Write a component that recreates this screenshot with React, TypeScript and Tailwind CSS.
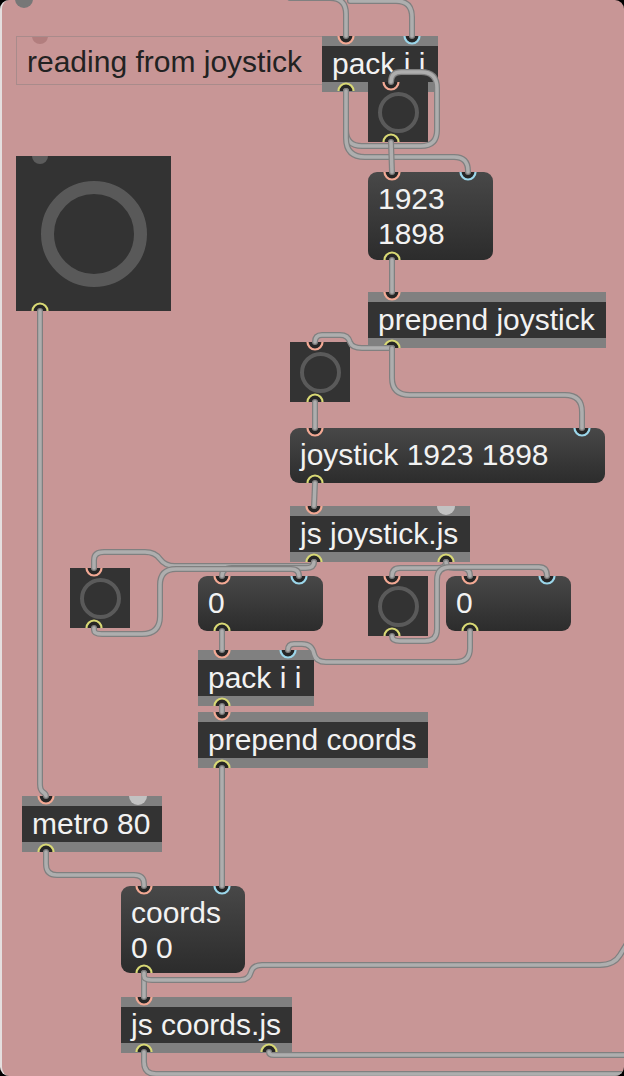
import React from 'react';

type Port = { x: number; y: number; c: 'hot' | 'cold' | 'out' };

const portColor = { hot: '#f3a994', cold: '#9bd6ea', out: '#d9d975' };

// inlets sit on the top edge, outlets on the bottom edge
const ports: Port[] = [
  // pack i i (top)
  { x: 346, y: 36, c: 'hot' }, { x: 412, y: 36, c: 'cold' }, { x: 346, y: 91, c: 'out' },
  // button 1
  { x: 391, y: 82, c: 'hot' }, { x: 391, y: 142, c: 'out' },
  // big square
  { x: 40, y: 311, c: 'out' },
  // 1923 1898
  { x: 392, y: 172, c: 'hot' }, { x: 468, y: 172, c: 'cold' }, { x: 392, y: 260, c: 'out' },
  // prepend joystick
  { x: 392, y: 292, c: 'hot' }, { x: 392, y: 348, c: 'out' },
  // button 2
  { x: 315, y: 342, c: 'hot' }, { x: 315, y: 402, c: 'out' },
  // joystick 1923 1898
  { x: 315, y: 428, c: 'hot' }, { x: 582, y: 428, c: 'cold' }, { x: 315, y: 483, c: 'out' },
  // js joystick.js
  { x: 314, y: 506, c: 'hot' }, { x: 314, y: 562, c: 'out' }, { x: 446, y: 562, c: 'out' },
  // button 3 / 0
  { x: 94, y: 568, c: 'hot' }, { x: 94, y: 628, c: 'out' },
  { x: 222, y: 576, c: 'hot' }, { x: 299, y: 576, c: 'cold' }, { x: 222, y: 631, c: 'out' },
  // button 4 / 0
  { x: 392, y: 576, c: 'hot' }, { x: 392, y: 636, c: 'out' },
  { x: 470, y: 576, c: 'hot' }, { x: 547, y: 576, c: 'cold' }, { x: 470, y: 631, c: 'out' },
  // pack i i (bottom)
  { x: 222, y: 650, c: 'hot' }, { x: 288, y: 650, c: 'cold' }, { x: 222, y: 706, c: 'out' },
  // prepend coords
  { x: 222, y: 712, c: 'hot' }, { x: 222, y: 768, c: 'out' },
  // metro 80
  { x: 46, y: 796, c: 'hot' }, { x: 46, y: 852, c: 'out' },
  // coords 0 0
  { x: 144, y: 886, c: 'hot' }, { x: 222, y: 886, c: 'cold' }, { x: 144, y: 973, c: 'out' },
  // js coords.js
  { x: 144, y: 997, c: 'hot' }, { x: 144, y: 1052, c: 'out' }, { x: 269, y: 1052, c: 'out' },
];

const cords: string[] = [
  'M 290 -2 L 330 -2 Q 346 -2 346 14 L 346 36',
  'M 350 1 L 396 1 Q 412 1 412 17 L 412 36',
  'M 346 91 L 346 130 Q 346 146 362 146 L 421 146 Q 437 146 437 130 L 437 88 Q 437 72 421 72 L 401 72 Q 391 72 391 82',
  'M 346 91 L 346 138 Q 346 157 365 157 L 454 157 Q 468 157 468 171 L 468 172',
  'M 391 142 L 392 172',
  'M 392 260 L 392 292',
  'M 392 348 L 362 348 Q 352 348 350 342 Q 348 335 340 335 L 322 335 Q 315 335 315 342',
  'M 392 348 L 392 378 Q 392 395 410 395 L 565 395 Q 582 395 582 412 L 582 428',
  'M 315 402 L 315 428',
  'M 315 483 L 314 506',
  'M 314 562 Q 314 566 306 566 L 175 566 Q 165 566 160 559 Q 155 552 145 552 L 104 552 Q 94 552 94 560 L 94 568',
  'M 314 562 Q 314 568 306 568 L 232 568 Q 222 568 222 576',
  'M 94 628 L 94 630 Q 94 634 102 634 L 142 634 Q 160 634 160 616 L 160 585 Q 160 569 176 569 L 291 569 Q 299 569 299 576',
  'M 446 562 Q 446 568 438 568 L 400 568 Q 392 568 392 576',
  'M 446 562 Q 446 568 454 568 L 462 568 Q 470 568 470 576',
  'M 392 636 Q 392 641 400 641 L 425 641 Q 437 641 437 629 L 437 580 Q 437 567 450 567 L 539 567 Q 547 567 547 576',
  'M 222 631 L 222 650',
  'M 470 631 L 470 648 Q 470 662 456 662 L 326 662 Q 316 662 314 654 Q 312 644 302 644 L 294 644 Q 288 644 288 650',
  'M 222 706 L 222 712',
  'M 222 768 L 222 886',
  'M 40 311 L 40 784 Q 40 790 43 792 Q 46 794 46 796',
  'M 46 852 L 46 864 Q 46 875 57 875 L 134 875 Q 144 875 144 884 L 144 886',
  'M 144 973 L 144 997',
  'M 144 973 L 144 976 Q 144 980 152 980 L 240 980 Q 249 980 251 972 Q 253 965 262 965 L 600 965 Q 614 965 620 955 L 628 942',
  'M 144 1052 L 144 1062 Q 144 1074 156 1074 L 630 1074',
  'M 269 1052 Q 269 1055 274 1055 L 630 1055',
];

function ObjBox({ pos, text, dot }: { pos: string; text: string; dot?: string }) {
  return (
    <div className={`absolute flex h-[56px] flex-col overflow-hidden ${pos}`}>
      <div className="h-[10px] bg-[#808080]" />
      <div className="h-[36px] whitespace-nowrap bg-[#333333] pl-[10px] text-[30px] leading-[35px] text-[#f2f2f2]">
        {text}
      </div>
      <div className="h-[10px] bg-[#808080]" />
      {dot && <div className={`absolute top-[-9px] h-[18px] w-[18px] rounded-full bg-[#c2c2c2] ${dot}`} />}
    </div>
  );
}

function MsgBox({ pos, lines }: { pos: string; lines: string[] }) {
  return (
    <div
      className={`absolute whitespace-nowrap rounded-[9px] bg-linear-to-b from-[#484848] to-[#2c2c2c] pl-[10px] pt-[9px] text-[30px] leading-[35px] text-[#f2f2f2] ${pos}`}
    >
      {lines.map((l) => (
        <div key={l}>{l}</div>
      ))}
    </div>
  );
}

function Btn({ pos }: { pos: string }) {
  return (
    <div className={`absolute flex h-[60px] w-[60px] items-center justify-center bg-[#333333] ${pos}`}>
      <div className="h-[41px] w-[41px] rounded-full border-4 border-[#5a5a5a]" />
    </div>
  );
}

export default function App() {
  return (
    <div className="h-[1076px] w-[624px] bg-black font-['Liberation_Sans',Arial,sans-serif]">
      <div className="relative h-full w-full overflow-hidden rounded-[9px] border-l-2 border-[#e4dfdf] bg-[#c89696]">
        <div className="absolute left-[13px] top-[-10px] h-[18px] w-[18px] rounded-full bg-[#777777]" />

        <div className="absolute left-[14px] top-[36px] h-[49px] w-[324px] overflow-hidden border border-[#a98b8b] pl-[10px] pt-[7px] text-[30px] leading-[35px] text-[#222222]">
          <div className="absolute left-[15px] top-[-9px] h-[16px] w-[16px] rounded-full bg-[#b27e7e]" />
          reading from joystick
        </div>

        <div className="absolute left-[14px] top-[156px] flex h-[155px] w-[155px] items-center justify-center overflow-hidden bg-[#333333]">
          <div className="absolute left-[16px] top-[-8px] h-[16px] w-[16px] rounded-full bg-[#5c5c5c]" />
          <div className="h-[106px] w-[106px] rounded-full border-[13px] border-[#595959]" />
        </div>

        <ObjBox pos="left-[320px] top-[36px] w-[116px]" text="pack i i" />
        <MsgBox pos="left-[366px] top-[172px] h-[88px] w-[125px] pt-[8px]" lines={['1923', '1898']} />
        <ObjBox pos="left-[366px] top-[292px] w-[238px]" text="prepend joystick" />
        <MsgBox pos="left-[288px] top-[428px] h-[55px] w-[315px]" lines={['joystick 1923 1898']} />
        <ObjBox pos="left-[288px] top-[506px] w-[180px]" text="js joystick.js" dot="left-[147px]" />
        <MsgBox pos="left-[196px] top-[576px] h-[55px] w-[125px]" lines={['0']} />
        <MsgBox pos="left-[444px] top-[576px] h-[55px] w-[125px]" lines={['0']} />
        <ObjBox pos="left-[196px] top-[650px] w-[116px]" text="pack i i" />
        <ObjBox pos="left-[196px] top-[712px] w-[230px]" text="prepend coords" />
        <ObjBox pos="left-[20px] top-[796px] w-[140px]" text="metro 80" dot="left-[107px]" />
        <MsgBox pos="left-[119px] top-[886px] h-[87px] w-[124px]" lines={['coords', '0 0']} />
        <ObjBox pos="left-[119px] top-[997px] w-[171px]" text="js coords.js" />

        <Btn pos="left-[366px] top-[82px]" />
        <Btn pos="left-[288px] top-[342px]" />
        <Btn pos="left-[68px] top-[568px]" />
        <Btn pos="left-[366px] top-[576px]" />

        <svg className="pointer-events-none absolute left-[-2px] top-0" width={626} height={1076}>
          {ports.map((p, i) => {
            const s = p.c === 'out' ? 1 : 0;
            return (
              <g key={i}>
                <path d={`M ${p.x - 7.5} ${p.y} A 7.5 7.5 0 0 ${s} ${p.x + 7.5} ${p.y} Z`} fill="#262626" />
                <path
                  d={`M ${p.x - 7.5} ${p.y} A 7.5 7.5 0 0 ${s} ${p.x + 7.5} ${p.y}`}
                  fill="none"
                  stroke={portColor[p.c]}
                  strokeWidth={2.2}
                />
              </g>
            );
          })}
          {cords.map((d, i) => (
            <g key={i} fill="none" strokeLinecap="round" strokeLinejoin="round">
              <path d={d} stroke="#808080" strokeWidth={6} />
              <path d={d} stroke="#aeaeae" strokeWidth={3.5} />
            </g>
          ))}
        </svg>
      </div>
    </div>
  );
}
